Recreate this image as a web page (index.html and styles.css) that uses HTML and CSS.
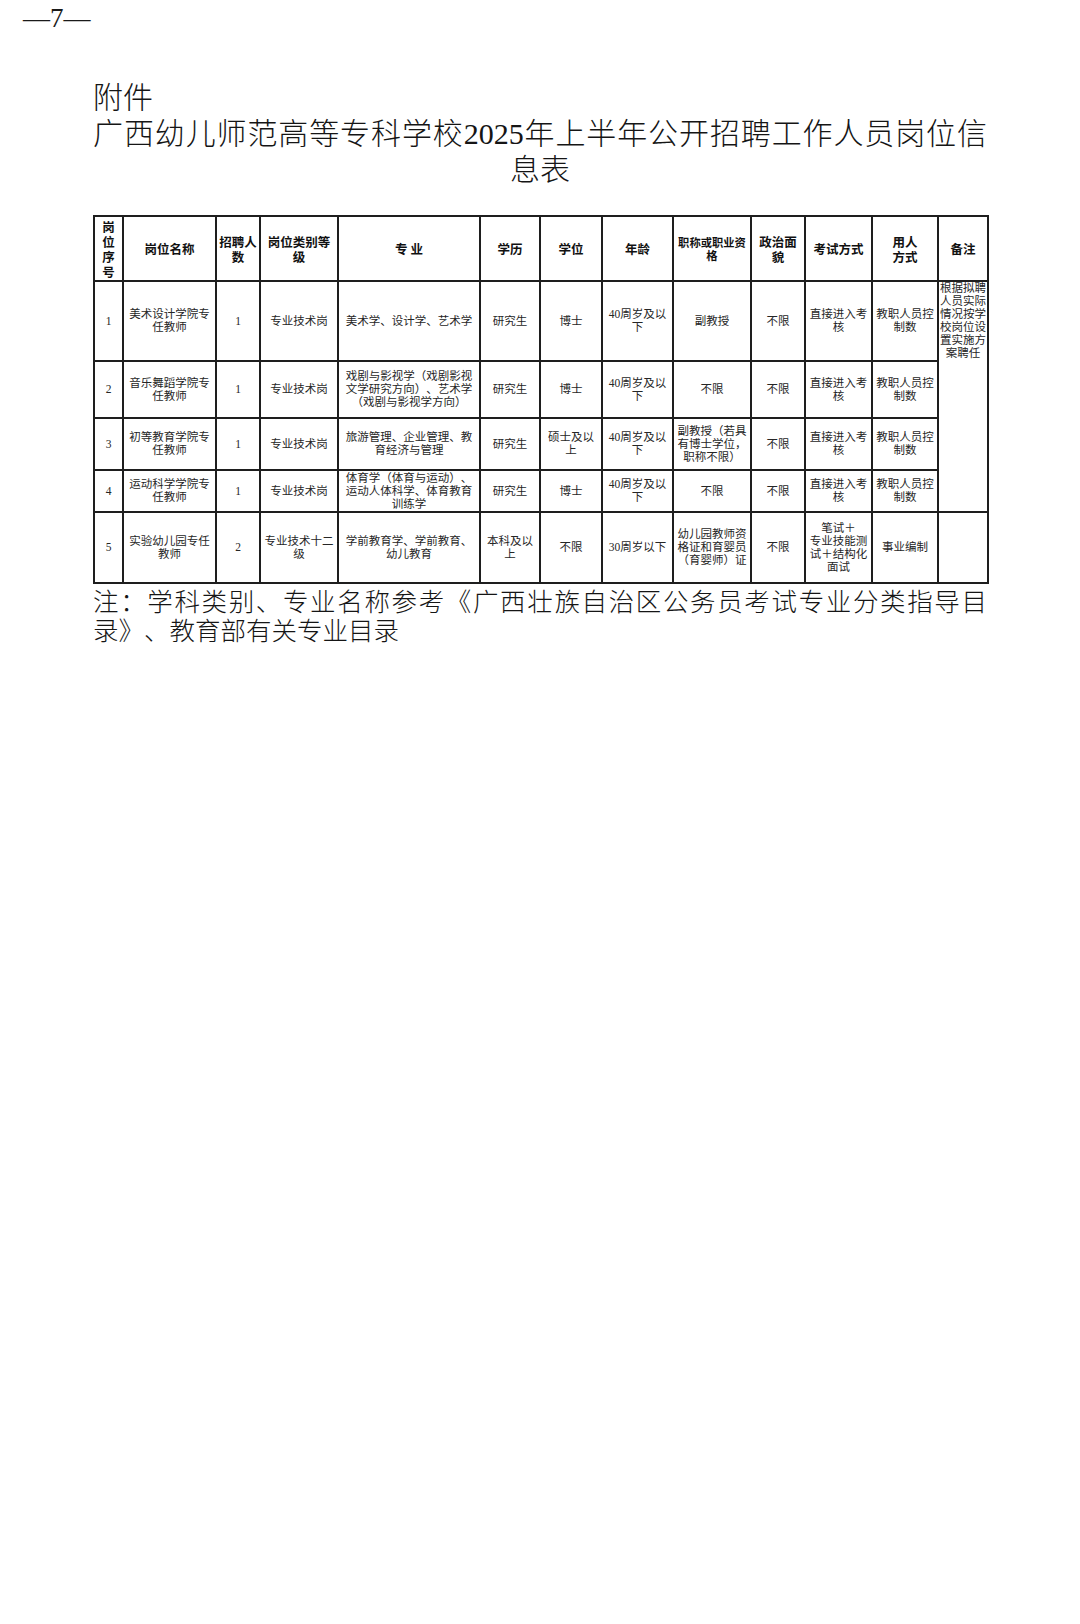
FILE: index.html
```html
<!DOCTYPE html>
<html lang="zh-CN">
<head>
<meta charset="utf-8">
<title>广西幼儿师范高等专科学校2025年上半年公开招聘工作人员岗位信息表</title>
<link rel="stylesheet" href="styles.css">
</head>
<body>
<div class="page-no">—7—</div>
<main class="doc">
  <div class="attach">附件</div>
  <h1 class="title">
    <span class="title-l1">广西幼儿师范高等专科学校2025年上半年公开招聘工作人员岗位信</span>
    <span class="title-l2">息表</span>
  </h1>
  <table class="posts">
    <colgroup>
      <col class="c1"><col class="c2"><col class="c3"><col class="c4"><col class="c5"><col class="c6"><col class="c7"><col class="c8"><col class="c9"><col class="c10"><col class="c11"><col class="c12"><col class="c13">
    </colgroup>
    <thead>
      <tr class="r-head">
        <th>岗位序号</th>
        <th>岗位名称</th>
        <th>招聘人数</th>
        <th>岗位类别等级</th>
        <th>专 业</th>
        <th>学历</th>
        <th>学位</th>
        <th>年龄</th>
        <th class="small">职称或职业资格</th>
        <th>政治面貌</th>
        <th>考试方式</th>
        <th>用人<br>方式</th>
        <th>备注</th>
      </tr>
    </thead>
    <tbody>
      <tr class="r1">
        <td>1</td>
        <td>美术设计学院专任教师</td>
        <td>1</td>
        <td>专业技术岗</td>
        <td>美术学、设计学、艺术学</td>
        <td>研究生</td>
        <td>博士</td>
        <td>40周岁及以下</td>
        <td>副教授</td>
        <td>不限</td>
        <td>直接进入考核</td>
        <td>教职人员控制数</td>
        <td class="remark" rowspan="4">根据拟聘人员实际情况按学校岗位设置实施方案聘任</td>
      </tr>
      <tr class="r2">
        <td>2</td>
        <td>音乐舞蹈学院专任教师</td>
        <td>1</td>
        <td>专业技术岗</td>
        <td>戏剧与影视学（戏剧影视文学研究方向）、艺术学（戏剧与影视学方向）</td>
        <td>研究生</td>
        <td>博士</td>
        <td>40周岁及以下</td>
        <td>不限</td>
        <td>不限</td>
        <td>直接进入考核</td>
        <td>教职人员控制数</td>
      </tr>
      <tr class="r3">
        <td>3</td>
        <td>初等教育学院专任教师</td>
        <td>1</td>
        <td>专业技术岗</td>
        <td>旅游管理、企业管理、教育经济与管理</td>
        <td>研究生</td>
        <td>硕士及以上</td>
        <td>40周岁及以下</td>
        <td>副教授（若具有博士学位，职称不限）</td>
        <td>不限</td>
        <td>直接进入考核</td>
        <td>教职人员控制数</td>
      </tr>
      <tr class="r4">
        <td>4</td>
        <td>运动科学学院专任教师</td>
        <td>1</td>
        <td>专业技术岗</td>
        <td>体育学（体育与运动）、运动人体科学、体育教育训练学</td>
        <td>研究生</td>
        <td>博士</td>
        <td>40周岁及以下</td>
        <td>不限</td>
        <td>不限</td>
        <td>直接进入考核</td>
        <td>教职人员控制数</td>
      </tr>
      <tr class="r5">
        <td>5</td>
        <td>实验幼儿园专任教师</td>
        <td>2</td>
        <td>专业技术十二级</td>
        <td>学前教育学、学前教育、幼儿教育</td>
        <td>本科及以上</td>
        <td>不限</td>
        <td>30周岁以下</td>
        <td>幼儿园教师资格证和育婴员（育婴师）证</td>
        <td>不限</td>
        <td>笔试＋<br>专业技能测试＋结构化面试</td>
        <td>事业编制</td>
        <td class="remark"></td>
      </tr>
    </tbody>
  </table>
  <div class="note">
    <div class="note-l1">注：学科类别、专业名称参考《广西壮族自治区公务员考试专业分类指导目</div>
    <div class="note-l2">录》、教育部有关专业目录</div>
  </div>
</main>
</body>
</html>
```
FILE: styles.css
```css
html, body {
  margin: 0;
  padding: 0;
  background: #ffffff;
}

body {
  width: 1080px;
  min-height: 1624px;
  color: #111111;
  font-family: "Liberation Serif", "Noto Sans CJK SC", serif;
  text-spacing-trim: space-all;
}

.page-no {
  padding: 3px 0 0 23px;
  font-family: "Liberation Serif", serif;
  font-size: 27px;
  line-height: 30px;
  color: #1a1a1a;
}

.doc {
  padding: 0 93px;
}

.attach {
  margin-top: 47px;
  font-family: "Liberation Serif", "Noto Sans CJK SC", sans-serif;
  font-weight: 300;
  font-size: 30px;
  line-height: 36px;
  color: #151515;
}

.title {
  margin: 0;
  font-family: "Liberation Serif", "Noto Sans CJK SC", sans-serif;
  font-weight: 300;
  font-size: 30px;
  line-height: 36px;
  color: #151515;
}

.title-l1 {
  display: block;
  text-align: justify;
  text-align-last: justify;
  white-space: nowrap;
}

.title-l2 {
  display: block;
  text-align: center;
}

.posts {
  margin-top: 27px;
  width: 894px;
  table-layout: fixed;
  border-collapse: collapse;
  font-family: "Liberation Serif", "Noto Sans CJK SC", sans-serif;
  color: #262626;
}

.c1 { width: 29px; }
.c2 { width: 93px; }
.c3 { width: 44px; }
.c4 { width: 78px; }
.c5 { width: 142px; }
.c6 { width: 60px; }
.c7 { width: 62px; }
.c8 { width: 71px; }
.c9 { width: 78px; }
.c10 { width: 54px; }
.c11 { width: 67px; }
.c12 { width: 66px; }
.c13 { width: 50px; }

.posts th,
.posts td {
  border: 2px solid #1e1e1e;
  padding: 0 2px;
  text-align: center;
  vertical-align: middle;
  word-break: break-all;
}

.posts th {
  font-family: "Noto Sans CJK SC", sans-serif;
  font-weight: 700;
  font-size: 12.5px;
  line-height: 15px;
  color: #111111;
}

.posts th.small {
  font-size: 11.3px;
  line-height: 13px;
}

.posts td {
  font-size: 11.5px;
  line-height: 13px;
}

.posts td.remark {
  padding: 0;
  vertical-align: top;
}

.r-head { height: 65px; }
.r1 { height: 80px; }
.r2 { height: 57px; }
.r3 { height: 52px; }
.r4 { height: 42px; }
.r5 { height: 71px; }

.note {
  margin-top: 1px;
  font-family: "Noto Sans CJK SC", sans-serif;
  font-weight: 300;
  font-size: 25.5px;
  line-height: 29px;
  color: #151515;
}

.note-l1 {
  text-align: justify;
  text-align-last: justify;
  white-space: nowrap;
}
```
